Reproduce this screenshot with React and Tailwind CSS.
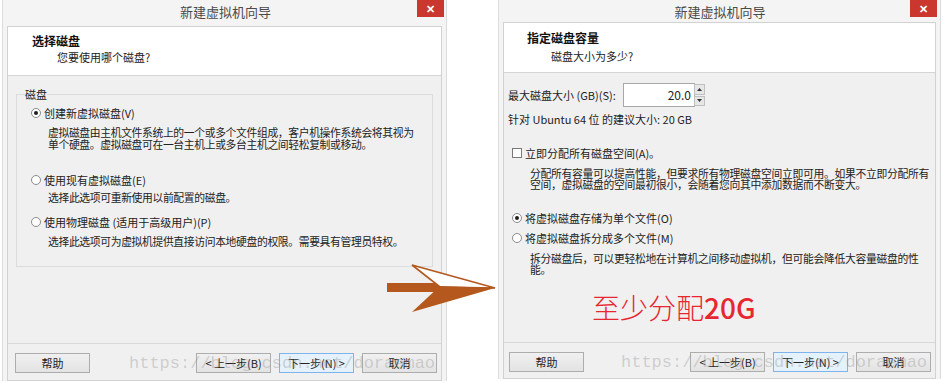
import React from "react";

const Radio = ({ checked }) => (
  <span className="w-[10px] h-[10px] rounded-full border border-[#8c8c8c] bg-white flex items-center justify-center shrink-0">
    {checked && <span className="w-[4px] h-[4px] rounded-full bg-[#1e1e1e]" />}
  </span>
);

const Btn = ({ children, primary }) => (
  <div
    className={
      primary
        ? "w-[75px] h-[20px] border border-[#7eb4ea] bg-[#e5f1fb] flex items-center justify-center text-[11px] text-[#222]"
        : "w-[75px] h-[20px] border border-[#adadad] bg-gradient-to-b from-[#f0f0f0] to-[#e3e3e3] flex items-center justify-center text-[11px] text-[#222]"
    }
  >
    {children}
  </div>
);

const TitleBar = ({ h }) => (
  <div className={`${h} grid grid-cols-[1fr_auto_1fr] items-start`}>
    <div />
    <div className="text-[13px] leading-[26px] text-[#4a4a4a] -mt-[1px]">新建虚拟机向导</div>
    <div className="flex justify-end">
      <div className="w-[27px] h-[17px] bg-[#c9372f] flex items-center justify-center text-white text-[11px] font-bold leading-none">
        ✕
      </div>
    </div>
  </div>
);

const Watermark = ({ left }) => (
  <div
    className={`absolute ${left} top-[9px] pointer-events-none font-['Liberation_Mono',monospace] text-[17px] leading-[22px] text-[rgba(140,140,140,0.35)] whitespace-nowrap`}
  >
    https://blog.csdn.net/doraemao
  </div>
);

function LeftWindow() {
  return (
    <div className="w-[445px] h-[381px] ml-[2px] bg-[#f4f4f4] border-l border-r border-[#dcdcdc] px-[4px] flex flex-col">
      <div className="h-[26px] -mr-[2px]">
        <TitleBar h="h-[26px]" />
      </div>
      <div className="flex-1 border border-[#d2d2d2] bg-[#f0f0f0] flex flex-col">
        <div className="h-[49px] bg-white border-b border-[#d6d6d6] pl-[24px] pt-[6px]">
          <div className="text-[12px] leading-[16px] font-bold text-[#111]">选择磁盘</div>
          <div className="text-[11px] leading-[16px] text-[#222] pl-[25px]">您要使用哪个磁盘?</div>
        </div>
        <div className="h-[267px] pt-[11px] pl-[8px] pr-[8px]">
          <fieldset className="border border-[#dcdcdc] pl-[14px] pb-[19px] text-[11px] text-[#222]">
            <legend className="-ml-[6px] text-[11px] leading-[14px] text-[#222]">磁盘</legend>
            <div className="mt-[5px] h-[14px] flex items-center gap-[3px]">
              <Radio checked />
              <span className="leading-[14px]">创建新虚拟磁盘(V)</span>
            </div>
            <div className="mt-[7px] pl-[17px] leading-[11.5px] text-[10.8px] tracking-[-0.35px] whitespace-nowrap">
              <div>虚拟磁盘由主机文件系统上的一个或多个文件组成，客户机操作系统会将其视为</div>
              <div>单个硬盘。虚拟磁盘可在一台主机上或多台主机之间轻松复制或移动。</div>
            </div>
            <div className="mt-[23px] h-[14px] flex items-center gap-[3px]">
              <Radio />
              <span className="leading-[14px]">使用现有虚拟磁盘(E)</span>
            </div>
            <div className="mt-[5px] pl-[17px] leading-[11.5px] text-[10.8px] tracking-[-0.35px] whitespace-nowrap">
              <div>选择此选项可重新使用以前配置的磁盘。</div>
            </div>
            <div className="mt-[11px] h-[14px] flex items-center gap-[3px]">
              <Radio />
              <span className="leading-[14px]">使用物理磁盘 (适用于高级用户)(P)</span>
            </div>
            <div className="mt-[7px] pl-[17px] leading-[11.5px] text-[10.8px] tracking-[-0.35px] whitespace-nowrap">
              <div>选择此选项可为虚拟机提供直接访问本地硬盘的权限。需要具有管理员特权。</div>
            </div>
          </fieldset>
        </div>
        <div className="relative flex-1 border-t border-[#d8d8d8] pt-[9px] pl-[7px] pr-[4px] flex">
          <Btn>帮助</Btn>
          <div className="flex-1" />
          <div className="flex gap-[8px]">
            <Btn>&lt; 上一步(B)</Btn>
            <Btn primary>下一步(N) &gt;</Btn>
            <Btn>取消</Btn>
          </div>
          <Watermark left="left-[121px]" />
        </div>
      </div>
    </div>
  );
}

function RightWindow() {
  return (
    <div className="w-[443px] h-[379px] ml-[51px] bg-[#f4f4f4] border-l border-r border-[#dcdcdc] px-[4px] flex flex-col">
      <div className="h-[22px] -mr-[1px]">
        <TitleBar h="h-[22px]" />
      </div>
      <div className="flex-1 border border-[#d2d2d2] bg-[#f0f0f0] flex flex-col">
        <div className="h-[50px] bg-white border-b border-[#d6d6d6] pl-[23px] pt-[7px]">
          <div className="text-[12px] leading-[16px] font-bold text-[#111]">指定磁盘容量</div>
          <div className="mt-[2px] text-[11px] leading-[16px] text-[#222] pl-[24px]">磁盘大小为多少?</div>
        </div>
        <div className="h-[269px] pt-[10px] pl-[4px] pr-[4px] text-[11px] text-[#222]">
          <div className="flex items-center h-[24px]">
            <span className="w-[115px] leading-[14px] whitespace-nowrap">最大磁盘大小 (GB)(S):</span>
            <div className="w-[72px] h-[24px] border border-[#a8a8a8] bg-white flex items-center justify-end pr-[3px] text-[12px]">
              20.0
            </div>
            <div className="w-[11px] h-[22px] flex flex-col gap-[1px] ml-[-1px]">
              <div className="flex-1 bg-[#e6e6e6] border border-[#c0c0c0] flex items-center justify-center">
                <svg width="5" height="3" viewBox="0 0 5 3"><path d="M0 3 L2.5 0 L5 3 Z" fill="#333" /></svg>
              </div>
              <div className="flex-1 bg-[#e6e6e6] border border-[#c0c0c0] flex items-center justify-center">
                <svg width="5" height="3" viewBox="0 0 5 3"><path d="M0 0 L2.5 3 L5 0 Z" fill="#333" /></svg>
              </div>
            </div>
          </div>
          <div className="mt-[4.5px] leading-[14px]">针对 Ubuntu 64 位 的建议大小: 20 GB</div>
          <div className="mt-[20.5px] h-[14px] flex items-center gap-[3px] pl-[4px]">
            <span className="w-[10px] h-[10px] border border-[#7a7a7a] bg-white shrink-0" />
            <span className="leading-[14px]">立即分配所有磁盘空间(A)。</span>
          </div>
          <div className="mt-[7.5px] pl-[22px] leading-[11px] text-[10.8px] tracking-[-0.3px] whitespace-nowrap">
            <div>分配所有容量可以提高性能，但要求所有物理磁盘空间立即可用。如果不立即分配所有</div>
            <div>空间，虚拟磁盘的空间最初很小，会随着您向其中添加数据而不断变大。</div>
          </div>
          <div className="mt-[21.5px] h-[14px] flex items-center gap-[3px] pl-[4px]">
            <Radio checked />
            <span className="leading-[14px]">将虚拟磁盘存储为单个文件(O)</span>
          </div>
          <div className="mt-[6px] h-[14px] flex items-center gap-[3px] pl-[4px]">
            <Radio />
            <span className="leading-[14px]">将虚拟磁盘拆分成多个文件(M)</span>
          </div>
          <div className="mt-[7.5px] pl-[22px] leading-[11px] text-[10.8px] tracking-[-0.3px] whitespace-nowrap">
            <div>拆分磁盘后，可以更轻松地在计算机之间移动虚拟机，但可能会降低大容量磁盘的性</div>
            <div>能。</div>
          </div>
          <div className="mt-[16px] pl-[84px] text-[28px] leading-[32px] text-[#e8262f] font-light">
            至少分配<span className="font-medium">20G</span>
          </div>
        </div>
        <div className="relative flex-1 border-t border-[#d8d8d8] pt-[9px] pl-[5px] pr-[4px] flex">
          <Btn>帮助</Btn>
          <div className="flex-1" />
          <div className="flex gap-[8px]">
            <Btn>&lt; 上一步(B)</Btn>
            <Btn primary>下一步(N) &gt;</Btn>
            <Btn>取消</Btn>
          </div>
          <Watermark left="left-[117px]" />
        </div>
      </div>
    </div>
  );
}

function Arrow() {
  return (
    <svg
      className="absolute left-[385px] top-[260px] pointer-events-none"
      width="115"
      height="56"
      viewBox="0 0 115 56"
    >
      <rect x="2" y="23" width="56" height="9" fill="#b4581d" />
      <polygon points="27,5 110,28 55,27" fill="#ffffff" stroke="#b4581d" strokeWidth="1.6" strokeLinejoin="miter" />
      <polygon points="55,26 110,28 27,52" fill="#b4581d" />
    </svg>
  );
}

export default function App() {
  return (
    <div className="relative w-[943px] h-[383px] bg-white overflow-hidden font-['Noto_Sans_CJK_SC','Noto_Sans',sans-serif]">
      <div className="flex items-start">
        <LeftWindow />
        <RightWindow />
      </div>
      <Arrow />
    </div>
  );
}
